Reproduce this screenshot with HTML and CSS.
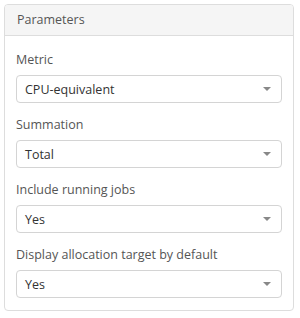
FILE: index.html
```html
<!DOCTYPE html>
<html lang="en">
<head>
    <meta charset="UTF-8">
    <title>Parameters</title>
    <link rel="stylesheet" href="styles.css">
</head>
<body>
    <div class="panel">
        <div class="panel-heading">Parameters</div>
        <div class="panel-body">
            <div class="field">
                <label>Metric</label>
                <div class="select"><span>CPU-equivalent</span><span class="caret"></span></div>
            </div>
            <div class="field">
                <label>Summation</label>
                <div class="select"><span>Total</span><span class="caret"></span></div>
            </div>
            <div class="field">
                <label>Include running jobs</label>
                <div class="select"><span>Yes</span><span class="caret"></span></div>
            </div>
            <div class="field">
                <label>Display allocation target by default</label>
                <div class="select"><span>Yes</span><span class="caret"></span></div>
            </div>
        </div>
    </div>
</body>
</html>
```
FILE: styles.css
```css
body {
    margin: 0;
    padding: 4px 6px 6px 4px;
    background: #fff;
    font-family: "Open Sans", "Noto Sans", sans-serif;
    font-size: 12.5px;
    color: #555;
}

.panel {
    border: 1px solid #ddd;
    border-radius: 4px;
}

.panel-heading {
    height: 30px;
    line-height: 30px;
    padding: 0 12px;
    background: #f5f5f5;
    border-bottom: 1px solid #ddd;
    border-radius: 3px 3px 0 0;
}

.panel-body {
    padding: 15px 11px 12px 11px;
}

.field {
    margin-bottom: 13px;
}

.field:last-child {
    margin-bottom: 0;
}

.field label {
    display: block;
    height: 18px;
    line-height: 18px;
    margin-bottom: 6px;
}

.select {
    display: flex;
    align-items: center;
    justify-content: space-between;
    height: 26px;
    padding: 0 10px 0 8px;
    border: 1px solid #d4d4d4;
    border-radius: 4px;
    color: #333;
}

.caret {
    width: 0;
    height: 0;
    border-left: 4px solid transparent;
    border-right: 4px solid transparent;
    border-top: 4px solid #888;
}
```
